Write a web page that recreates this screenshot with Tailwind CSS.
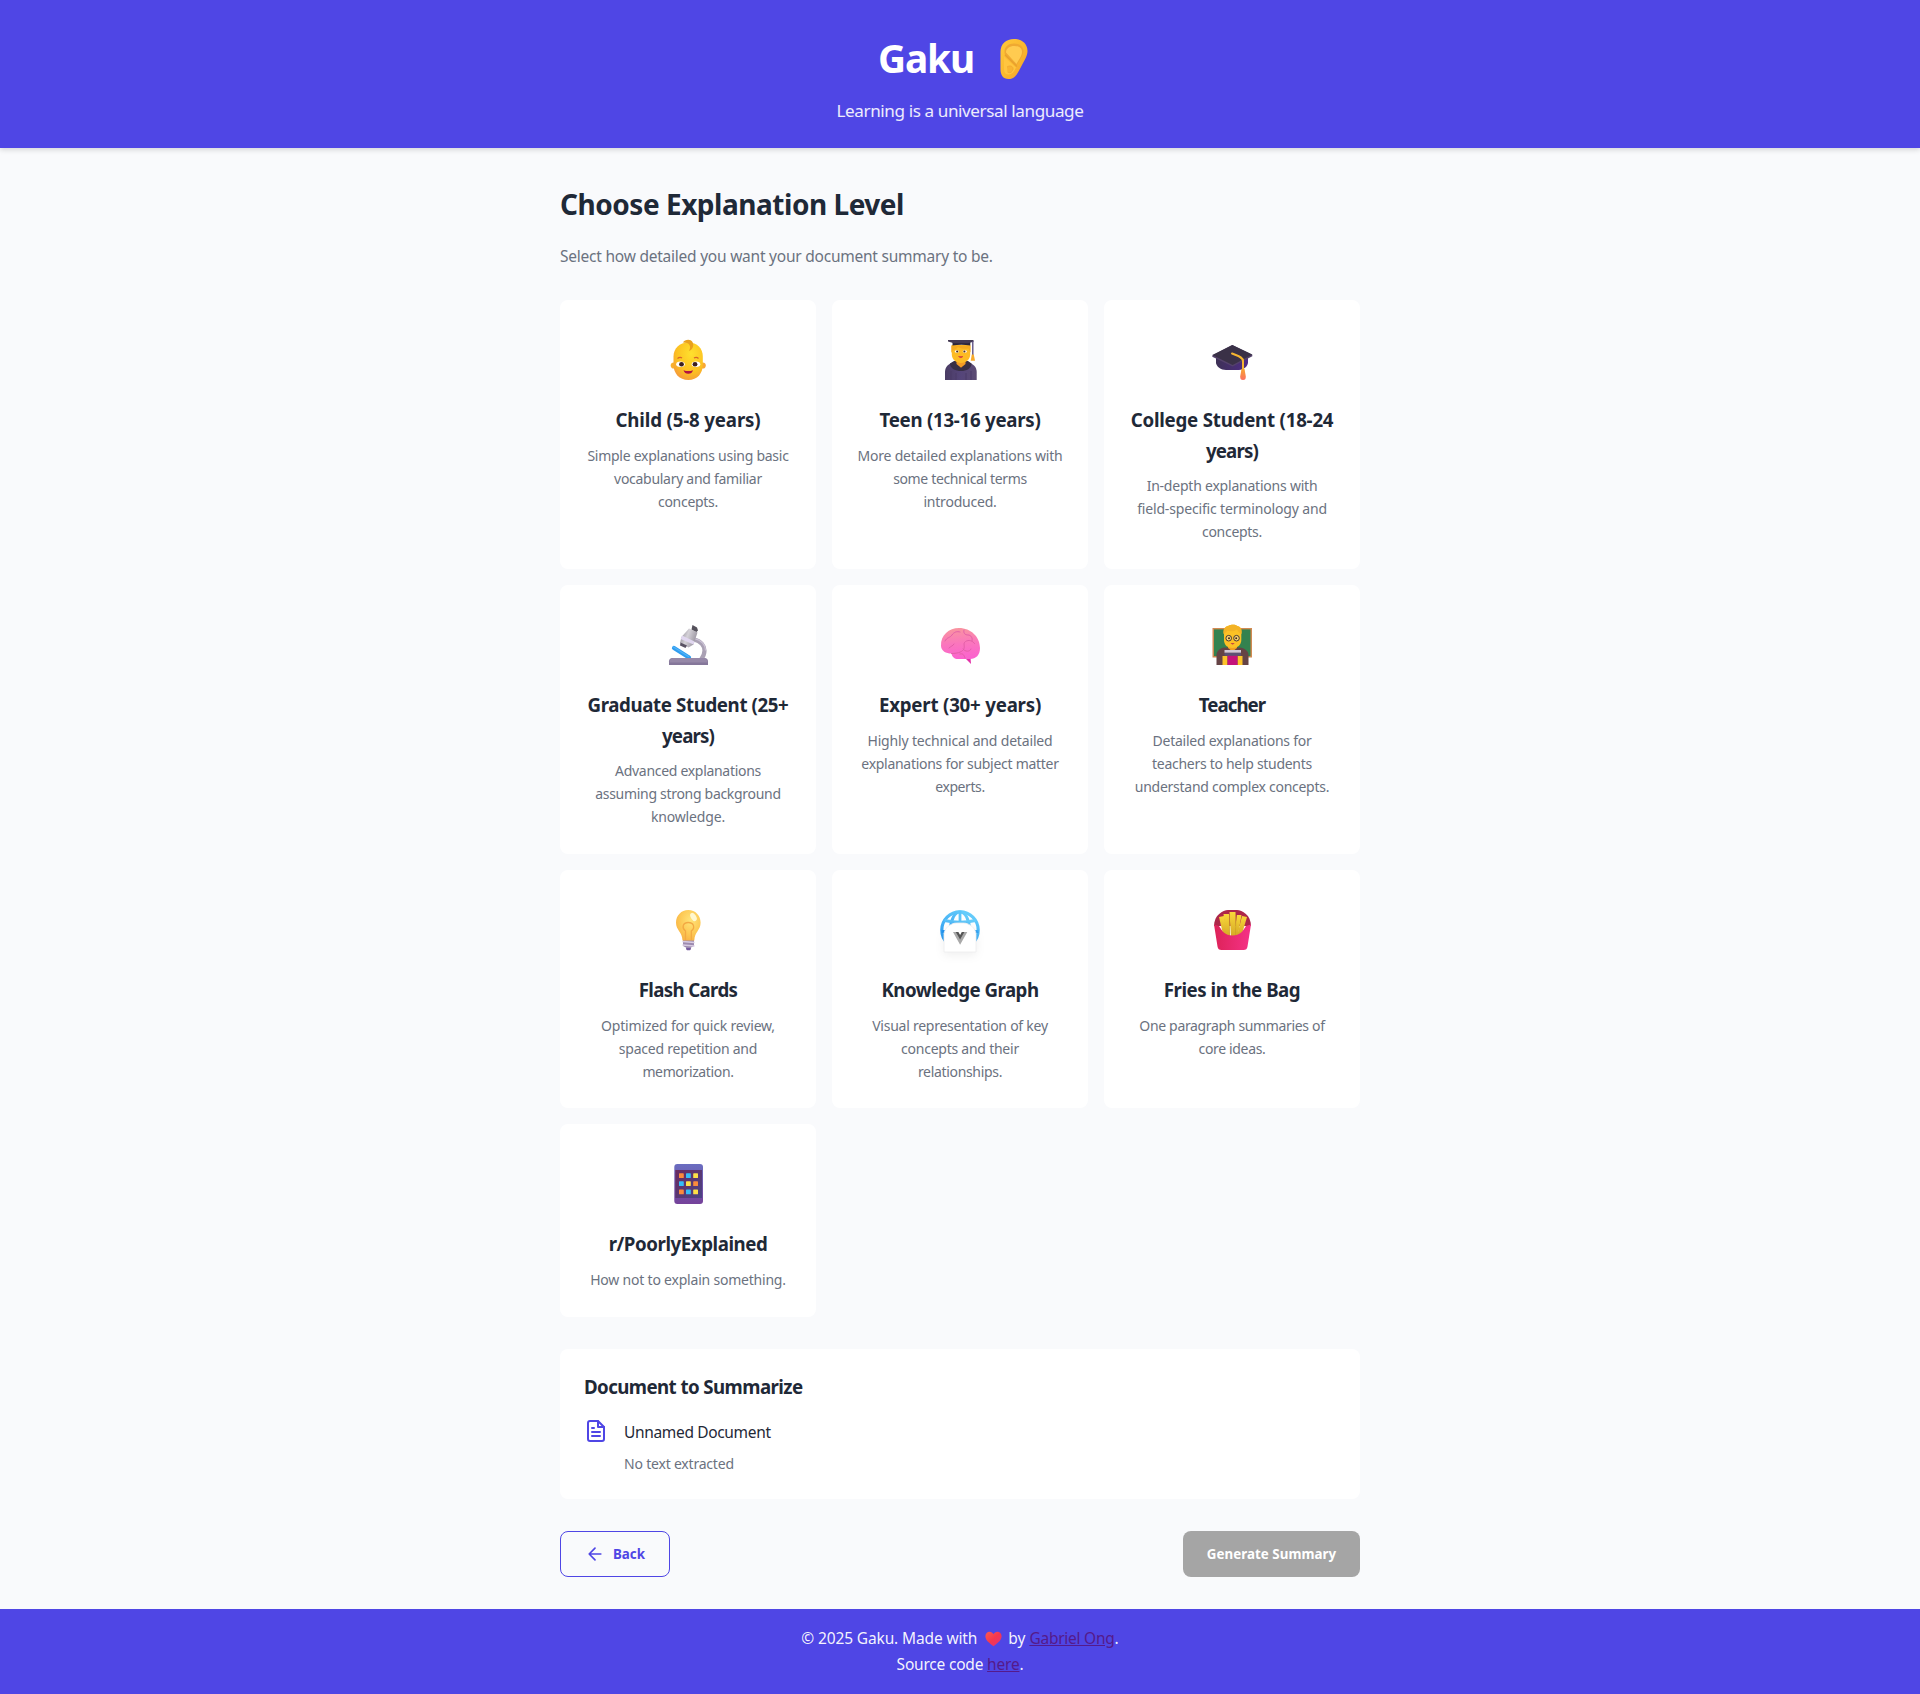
<!DOCTYPE html>
<html lang="en">
<head>
<meta charset="utf-8">
<title>Gaku</title>
<script src="https://cdn.jsdelivr.net/npm/@tailwindcss/browser@4"></script>
</head>
<body class="min-h-screen flex flex-col bg-[#f9fafc] text-[#1f2937] font-['Noto_Sans','Open_Sans',sans-serif]">

<header class="h-[148px] bg-[#4f46e5] text-white pt-[25px] flex flex-col items-center shadow-[0_2px_5px_rgba(0,0,0,0.14)]">
  <h1 class="h-16 mb-2 flex items-center gap-[20px] pr-[8px] text-[38.8px] leading-[64px] font-bold tracking-[-1.1px]">
    <span class="pt-0.5">Gaku</span>
    <svg class="w-10 h-11 mt-[3px]" viewBox="0 0 40 44">
      <defs>
        <linearGradient id="ear" x1="0" y1="0" x2="1" y2="1"><stop offset="0" stop-color="#ffc93c"/><stop offset=".6" stop-color="#f9b52c"/><stop offset="1" stop-color="#f09a35"/></linearGradient>
      </defs>
      <path d="M6.500 15C6.500 7 12 2 20 2c8 0 13.500 5 13.500 12 0 5-3 9-5.500 14-2.500 5-4.500 9-7 11.500C19 41.500 17 42 14.500 42 9 42 6.500 38 6.500 32z" fill="url(#ear)"/>
      <path d="M10.500 15c0-5.500 4-8.500 9.500-8.500s9.500 3 9.500 7.500c0 4.500-4.500 10-7 15L11 18.500z" fill="#efa932"/>
      <path d="M12 15.500c0-4 3.500-6.500 8.500-6.500 5 0 7.500 2.500 7.500 6 0 4-3.500 8-5.500 12z" fill="#ffcb50"/>
      <path d="M10 19.500l12 11c-2 4.500-4.500 7-7.500 7-3.500 0-4.500-3-4.500-6z" fill="#ffc540"/>
      <path d="M11 18l12 11.500" stroke="#e8a02e" stroke-width="1.300"/>
      <path d="M13 30c3-2 6.500-1 6 2.500-.8 3-3.500 4-5.500 2.500" fill="#f8b432" stroke="#f0a530" stroke-width=".8"/>
    </svg>
  </h1>
  <p class="text-[17.1px] leading-[28.16px] text-white/90 tracking-[-0.40px]">Learning is a universal language</p>
</header>

<main class="w-[800px] mx-auto pt-[33px] pb-8">
  <h2 class="text-[28px] leading-[46.08px] font-bold tracking-[-0.47px] mb-4">Choose Explanation Level</h2>
  <p class="text-[15.5px] leading-[25.6px] text-[#6b7280] tracking-[-0.23px] pt-px mb-[30px]">Select how detailed you want your document summary to be.</p>

  <section class="grid grid-cols-3 gap-4 text-center whitespace-nowrap">

    <article class="bg-white rounded-lg border-2 border-white p-6 pb-[23.4px] flex flex-col items-center">
      <div class="h-[62.75px] mb-[16.4px] pt-3">
        <svg class="w-11 h-11" viewBox="0 0 44 44">
          <defs><radialGradient id="baby" cx=".6" cy=".3" r=".75"><stop offset="0" stop-color="#ffe02e"/><stop offset=".65" stop-color="#fcc121"/><stop offset="1" stop-color="#f59a3b"/></radialGradient></defs>
          <circle cx="7.800" cy="27.500" r="3.100" fill="#f9b02f"/><circle cx="36.700" cy="27.500" r="3.100" fill="#f9a836"/>
          <path d="M22.300 4.500c9 0 14.500 6 14.500 14v8c0 9-5.500 15.500-14.500 15.500S7.500 35.500 7.500 26.500v-8c0-8 6-14 14.800-14z" fill="url(#baby)"/>
          <path d="M17 4.500c1.500-3 7.500-4 9.500-.5 2 4-.5 8-3.500 9 2-4 1-7-2-8z" fill="#e9a11e"/>
          <path d="M11.500 20.500q2.500-2 4.500-.5M28 20q2.500-1.500 4.500.5" stroke="#d8642a" stroke-width="1.200" fill="none"/>
          <ellipse cx="14.500" cy="26.200" rx="4.300" ry="2.700" fill="#fff"/><ellipse cx="30" cy="26.200" rx="4.300" ry="2.700" fill="#fff"/>
          <ellipse cx="15.500" cy="26.300" rx="2.400" ry="2.300" fill="#3b2020"/><ellipse cx="29" cy="26.300" rx="2.400" ry="2.300" fill="#3b2020"/>
          <path d="M17.500 32.200q4.800 1.800 9.500 0-1 3.600-4.700 3.600t-4.800-3.600z" fill="#b01243"/>
        </svg>
      </div>
      <h3 class="text-[18.7px] leading-[30.72px] font-bold mb-2 tracking-[-0.15px]">Child (5-8 years)</h3>
      <p class="text-sm leading-[23.04px] text-[#6b7280]"><span class="block tracking-[-0.26px]">Simple explanations using basic</span><span class="block tracking-[-0.29px]">vocabulary and familiar</span><span class="block tracking-[-0.28px]">concepts.</span></p>
    </article>

    <article class="bg-white rounded-lg border-2 border-white p-6 pb-[23.4px] flex flex-col items-center">
      <div class="h-[62.75px] mb-[16.4px] pt-3">
        <svg class="w-11 h-11" viewBox="0 0 44 44">
          <defs><linearGradient id="robe" x1="0" x2="1"><stop offset="0" stop-color="#4a3c63"/><stop offset=".5" stop-color="#55457a"/><stop offset="1" stop-color="#5b4b72"/></linearGradient></defs>
          <path d="M7 42V34c0-5 3.500-8.500 8-9.500h15.500c4.500 1 8.200 4.500 8.200 9.500v8z" fill="url(#robe)"/>
          <path d="M13 33v9M18 35v7M28 35v7M33 33v9" stroke="#4a3b68" stroke-width="1"/>
          <path d="M12 25.500l4-2.500h14l3.500 2.500c0 5-5 7.500-10.500 7.500S12 30.500 12 25.500z" fill="#382f45"/>
          <path d="M18.500 20h9v6l-4.500 3.800-4.500-3.800z" fill="#f39b25"/>
          <path d="M13.800 7h18.400v9.500c0 4.500-4 8.500-9.200 8.500s-9.200-4-9.200-8.500z" fill="#fdbb25"/>
          <path d="M13.300 7.500h19.200v7l-2.200-4c-4 1-9-.5-10.500-1.500-1 2-3 3-5 3l-1.500 3z" fill="#f5aa20"/>
          <ellipse cx="18.800" cy="13.500" rx="2" ry="1.300" fill="#fff"/><ellipse cx="26.800" cy="13.500" rx="2" ry="1.300" fill="#fff"/>
          <circle cx="19.200" cy="13.500" r="1.100" fill="#4a2a20"/><circle cx="26.400" cy="13.500" r="1.100" fill="#4a2a20"/>
          <path d="M20.500 18.500h4.500q-2.200 2.400-4.500 0z" fill="#c02645" stroke="#d9453a" stroke-width=".6"/>
          <path d="M14.500 4h17.800v3.500q-9-1.500-17.800 0z" fill="#2d2638"/>
          <path d="M10 2h25.500v1.700L30 5.200H16l-6-1.700z" fill="#443a54"/>
          <path d="M34.800 3v14" stroke="#54467a" stroke-width="1.300"/><path d="M33.800 16.500h2l1.200 6.200h-4.300z" fill="#f8ab2c"/>
        </svg>
      </div>
      <h3 class="text-[18.7px] leading-[30.72px] font-bold mb-2 tracking-[-0.26px]">Teen (13-16 years)</h3>
      <p class="text-sm leading-[23.04px] text-[#6b7280]"><span class="block tracking-[-0.19px]">More detailed explanations with</span><span class="block tracking-[-0.35px]">some technical terms</span><span class="block tracking-[-0.22px]">introduced.</span></p>
    </article>

    <article class="bg-white rounded-lg border-2 border-white p-6 pb-[23.4px] flex flex-col items-center">
      <div class="h-[62.75px] mb-[16.4px] pt-3">
        <svg class="w-11 h-11" viewBox="0 0 44 44">
          <defs><linearGradient id="capb" x1="0" x2="1"><stop offset="0" stop-color="#3d3155"/><stop offset="1" stop-color="#4f2c86"/></linearGradient><linearGradient id="tas" x1="0" y1="0" x2="0" y2="1"><stop offset="0" stop-color="#f7a52f"/><stop offset="1" stop-color="#fc6f62"/></linearGradient></defs>
          <path d="M6 17l32 0v7.500c0 4-5 7.500-9 7.500H16c-5 0-10-3.500-10-7.500z" fill="url(#capb)"/>
          <path d="M2.300 17.500L22.300 7l20 9.700v1.600L22.600 28.500 2.300 18.700z" fill="#54426b"/>
          <path d="M2.300 17L22.300 7l20 9.400L22.600 27z" fill="#3a3147"/>
          <path d="M22 15.500c6 2.500 11 3.500 11 7.500v9" stroke="#f5b531" stroke-width="2" fill="none" stroke-linecap="round"/>
          <path d="M31.500 31h3l1.300 7.500q.2 3.500-2.800 3.500t-2.800-3.500z" fill="url(#tas)"/>
        </svg>
      </div>
      <h3 class="text-[18.7px] leading-[30.72px] font-bold mb-2"><span class="block tracking-[-0.22px]">College Student (18-24</span><span class="block tracking-[-0.85px]">years)</span></h3>
      <p class="text-sm leading-[23.04px] text-[#6b7280]"><span class="block tracking-[-0.22px]">In-depth explanations with</span><span class="block tracking-[-0.16px]">field-specific terminology and</span><span class="block tracking-[-0.28px]">concepts.</span></p>
    </article>

    <article class="bg-white rounded-lg border-2 border-white p-6 pb-[23.4px] flex flex-col items-center">
      <div class="h-[62.75px] mb-[16.4px] pt-3">
        <svg class="w-11 h-11" viewBox="0 0 44 44">
          <defs><linearGradient id="tube" x1="0" y1="0" x2="1" y2=".4"><stop offset="0" stop-color="#85818b"/><stop offset=".5" stop-color="#d5d2d8"/><stop offset="1" stop-color="#9b96a1"/></linearGradient></defs>
          <path d="M28 16.500c7 1.500 10.500 6.500 10.500 11 0 3-1 6-3.500 9" stroke="#aaa1b4" stroke-width="4.200" fill="none"/>
          <path d="M28 15.500c8 1.500 11.500 7 11.500 12" stroke="#ccc3d6" stroke-width="1.200" fill="none"/>
          <path d="M8 25l15 9.500" stroke="#2f9df0" stroke-width="4.200" stroke-linecap="round"/>
          <path d="M7.500 24l15 9.500" stroke="#52b2f7" stroke-width="1.200" stroke-linecap="round"/>
          <path d="M23 5.500l8.500 4-4 12-5 3-8.500-4.500 1.500-6z" fill="url(#tube)"/>
          <path d="M16 12.500l12.500 6-1 3-12.800-5.500z" fill="#e1d7f0"/>
          <path d="M26.500 2l4.500 2.500 1 3-1.500 1.500-5-2.500z" fill="#55515b"/><path d="M14.500 19.500l6.500 3-1.500 2.500-5.500-2.500z" fill="#5a5364"/>
          <path d="M3 42v-3.500C3 36 4.500 35 7 35h31c2.500 0 4 1 4 3.500V42z" fill="#85779a"/><path d="M3.500 39.500q0-4.500 4-4.500h30q4 0 4 4.500z" fill="#9688a8"/>
        </svg>
      </div>
      <h3 class="text-[18.7px] leading-[30.72px] font-bold mb-2"><span class="block tracking-[-0.39px]">Graduate Student (25+</span><span class="block tracking-[-0.85px]">years)</span></h3>
      <p class="text-sm leading-[23.04px] text-[#6b7280]"><span class="block tracking-[-0.3px]">Advanced explanations</span><span class="block tracking-[-0.30px]">assuming strong background</span><span class="block tracking-[-0.16px]">knowledge.</span></p>
    </article>

    <article class="bg-white rounded-lg border-2 border-white p-6 pb-[23.4px] flex flex-col items-center">
      <div class="h-[62.75px] mb-[16.4px] pt-3">
        <svg class="w-11 h-11" viewBox="0 0 44 44">
          <defs><linearGradient id="brain" x1=".4" y1="0" x2=".5" y2="1"><stop offset="0" stop-color="#f9959f"/><stop offset=".5" stop-color="#fa76bd"/><stop offset="1" stop-color="#fb62cf"/></linearGradient></defs>
          <path d="M27 34l5.500.5.500 6.500-5-5z" fill="#e331a8"/>
          <path d="M3 23C2.500 12 11 5 21 5c12 0 21 9 21 20 0 7-4 11-10 11H20c-3.500 0-6-2-6.500-5.500C8 30.500 3.300 28 3 23z" fill="url(#brain)"/>
          <path d="M7 18c2-4 5-3 7-6s5-4 8-3M26 7c-1 3 1 5 4 5s5 3 4 6M13.500 30.500c5 0 10-1 12-4s-1-6 2-8 7-1 9 2M25 26c2 3 7 3 8 0M22 31c3-1 4 1 5 4M11 25c2-2 4-2 5-4" stroke="#e35fa8" stroke-width="1" fill="none" stroke-linecap="round"/>
        </svg>
      </div>
      <h3 class="text-[18.7px] leading-[30.72px] font-bold mb-2 tracking-[-0.21px]">Expert (30+ years)</h3>
      <p class="text-sm leading-[23.04px] text-[#6b7280]"><span class="block tracking-[-0.17px]">Highly technical and detailed</span><span class="block tracking-[-0.28px]">explanations for subject matter</span><span class="block tracking-[-0.41px]">experts.</span></p>
    </article>

    <article class="bg-white rounded-lg border-2 border-white p-6 pb-[23.4px] flex flex-col items-center">
      <div class="h-[62.75px] mb-[16.4px] pt-3">
        <svg class="w-11 h-11" viewBox="0 0 44 44">
          <rect x="2.500" y="5" width="39.500" height="29.500" fill="#d28a52"/><rect x="4" y="6.400" width="36.500" height="26.700" fill="#33824f"/>
          <path d="M6.500 42V32c0-4 3.500-7 8-7.500h15c5 .5 9 3.500 9 7.500v10z" fill="#654345"/>
          <path d="M12.500 33h5v9h-5zM27.500 33h5v9h-5z" fill="#fcc32a"/><path d="M17.500 32h10v10h-10z" fill="#c4127a"/>
          <path d="M18 21h9v4l-4.500 3.500L18 25z" fill="#f1a024"/>
          <path d="M14 9.500C14 4 17 2 22.500 2s8.800 2 8.800 7.500V17c0 5-3.800 8-8.800 8S14 22 14 17z" fill="#fdc125"/>
          <path d="M13.500 11c-1-5 2-8 5-8 2-2 7.500-2 8.500 0 4 0 5.500 4 4.500 8-2-1-3.500-2.500-4.500-4.500-3 2.500-7.500 2-9.500 1-1 1.500-2.500 2.500-4 3.500z" fill="#f3b325"/>
          <circle cx="18.700" cy="15.200" r="2.800" fill="#fdd573" stroke="#473833" stroke-width="1"/><circle cx="26.500" cy="15.200" r="2.800" fill="#fdd573" stroke="#473833" stroke-width="1"/>
          <circle cx="19" cy="15.200" r="1" fill="#3b2621"/><circle cx="26.200" cy="15.200" r="1" fill="#3b2621"/>
          <path d="M20.500 20.300h4.200q-2 2.300-4.200 0z" fill="#b41f4b"/>
          <rect x="14.500" y="27" width="16.500" height="2.800" fill="#d1c8d6"/><rect x="14.500" y="29.800" width="16.500" height="3" fill="#5c5273"/>
        </svg>
      </div>
      <h3 class="text-[18.7px] leading-[30.72px] font-bold mb-2 tracking-[-0.95px]">Teacher</h3>
      <p class="text-sm leading-[23.04px] text-[#6b7280]"><span class="block tracking-[-0.25px]">Detailed explanations for</span><span class="block tracking-[-0.29px]">teachers to help students</span><span class="block tracking-[-0.27px]">understand complex concepts.</span></p>
    </article>

    <article class="bg-white rounded-lg border-2 border-white p-6 pb-[23.4px] flex flex-col items-center">
      <div class="h-[62.75px] mb-[16.4px] pt-3">
        <svg class="w-11 h-11" viewBox="0 0 44 44">
          <defs><radialGradient id="bulb" cx=".6" cy=".35" r=".7"><stop offset="0" stop-color="#ffe479"/><stop offset=".6" stop-color="#fdc955"/><stop offset="1" stop-color="#f8b244"/></radialGradient></defs>
          <path d="M17 32h11v6l-3 1.500-.5 2.500h-4l-.5-2.500-3-1.500z" fill="#9d8bb0"/>
          <path d="M16.500 33.500l12 1M16.500 37l12 1" stroke="#d7cbe2" stroke-width="1.300"/><path d="M20 40h5l-1 2.200h-3z" fill="#7659a0"/>
          <path d="M22.300 2c7 0 12.300 5.500 12.300 12.500 0 8-6 9-6.300 18H16.500c-.3-9-6.500-10-6.500-18C10 7.500 15.300 2 22.300 2z" fill="url(#bulb)"/>
          <path d="M19.500 32V23c-4-3-3-8.500 2.800-8.500s7 5.500 3 8.500v9" stroke="#f3a943" stroke-width="1.300" fill="none"/>
          <ellipse cx="27.500" cy="9" rx="2.600" ry="4.500" transform="rotate(-32 27.500 9)" fill="#fff8d0"/>
        </svg>
      </div>
      <h3 class="text-[18.7px] leading-[30.72px] font-bold mb-2 tracking-[-0.65px]">Flash Cards</h3>
      <p class="text-sm leading-[23.04px] text-[#6b7280]"><span class="block tracking-[-0.18px]">Optimized for quick review,</span><span class="block tracking-[-0.23px]">spaced repetition and</span><span class="block tracking-[-0.36px]">memorization.</span></p>
    </article>

    <article class="bg-white rounded-lg border-2 border-white p-6 pb-[23.4px] flex flex-col items-center">
      <div class="h-[62.75px] mb-[16.4px] pt-3">
        <svg class="w-11 h-11 overflow-visible" viewBox="0 0 44 44">
          <defs><linearGradient id="globe" x1=".7" y1="0" x2=".2" y2="1"><stop offset="0" stop-color="#66cdfb"/><stop offset="1" stop-color="#2494ef"/></linearGradient></defs>
          <g fill="none" stroke="url(#globe)" stroke-width="3"><circle cx="22" cy="22" r="18.200" stroke-width="3.200"/><ellipse cx="22" cy="22" rx="9.500" ry="18.200"/><path d="M6.500 12.500q15.500 3.500 31 0M3.500 23.500q18 .1 37 0"/></g>
          <path d="M22 3v14" stroke="#5cc4f9" stroke-width="2.800"/>
          <path class="drop-shadow-[0_3px_4px_rgba(0,0,0,0.06)]" d="M6 44V26.500C6 20 13 15 18.500 15h7C31 15 38 20 38 26.500V44z" fill="#fff" stroke="#ececee" stroke-width=".8"/>
          <path d="M15 24h4.500l2.600 4.500 2.600-4.500h4.600l-7.200 12.700z" fill="#a9a9a9"/><path d="M17.800 24h2.600l1.700 3 1.700-3h2.600l-4.300 7.500z" fill="#555"/>
        </svg>
      </div>
      <h3 class="text-[18.7px] leading-[30.72px] font-bold mb-2 tracking-[-0.52px]">Knowledge Graph</h3>
      <p class="text-sm leading-[23.04px] text-[#6b7280]"><span class="block tracking-[-0.25px]">Visual representation of key</span><span class="block tracking-[-0.24px]">concepts and their</span><span class="block tracking-[-0.32px]">relationships.</span></p>
    </article>

    <article class="bg-white rounded-lg border-2 border-white p-6 pb-[23.4px] flex flex-col items-center">
      <div class="h-[62.75px] mb-[16.4px] pt-3">
        <svg class="w-11 h-11" viewBox="0 0 44 44">
          <defs><linearGradient id="bag" x1="0" x2="1"><stop offset="0" stop-color="#dd2258"/><stop offset="1" stop-color="#f53287"/></linearGradient><linearGradient id="fry" x1="0" y1="0" x2="0" y2="1"><stop offset="0" stop-color="#f9d83a"/><stop offset="1" stop-color="#d3a524"/></linearGradient></defs>
          <path d="M4 18C4 7 13 2 18 2h9c5 0 14 5 14 16z" fill="#ad2749"/>
          <g fill="url(#fry)"><path d="M9 9l5-1 4 20-5-2z"/><path d="M37 9l-5-1-5 20 5-2z"/><path d="M13.500 6h5.500l1 24-4-2z"/><path d="M27 7h4.500l-3.500 20-4 1z"/><path d="M19.500 4h6l.500 26h-5z"/></g>
          <path d="M19.500 7v21M26 7l-.6 21" stroke="#c79a20" stroke-width=".6"/>
          <path d="M4 16.500l5 1.500c3 5 6 9.500 13.500 9.500s10.500-4.500 13.500-9.500l5-1.500-3.500 22q-.5 3.500-4 3.500h-22q-3.500 0-4-3.500z" fill="url(#bag)"/>
        </svg>
      </div>
      <h3 class="text-[18.7px] leading-[30.72px] font-bold mb-2 tracking-[-0.47px]">Fries in the Bag</h3>
      <p class="text-sm leading-[23.04px] text-[#6b7280]"><span class="block tracking-[-0.34px]">One paragraph summaries of</span><span class="block tracking-[-0.34px]">core ideas.</span></p>
    </article>

    <article class="bg-white rounded-lg border-2 border-white p-6 pb-[23.4px] flex flex-col items-center">
      <div class="h-[62.75px] mb-[16.4px] pt-3">
        <svg class="w-11 h-11" viewBox="0 0 44 44">
          <defs><linearGradient id="phone" x1="0" y1="0" x2="0" y2="1"><stop offset="0" stop-color="#6a6dc0"/><stop offset="1" stop-color="#75429a"/></linearGradient><linearGradient id="screen" x1="0" y1="0" x2="1" y2="1"><stop offset="0" stop-color="#6a2a5e"/><stop offset="1" stop-color="#4a4486"/></linearGradient></defs>
          <rect x="8.300" y="2" width="28.700" height="40" rx="3" fill="url(#phone)"/><rect x="9.300" y="8" width="26.700" height="28" fill="url(#screen)"/>
          <g fill="#fb8b3c"><rect x="13" y="11.300" width="4.800" height="4.800" rx=".6"/><rect x="27.200" y="19.300" width="4.800" height="4.800" rx=".6"/><rect x="13" y="27.500" width="4.800" height="4.800" rx=".6"/></g>
          <g fill="#35bdf8"><rect x="20" y="11.300" width="4.800" height="4.800" rx=".6"/><rect x="13" y="19.300" width="4.800" height="4.800" rx=".6"/><rect x="20" y="27.500" width="4.800" height="4.800" rx=".6"/></g>
          <g fill="#fde047"><rect x="27.200" y="11.300" width="4.800" height="4.800" rx=".6"/><rect x="20" y="19.300" width="4.800" height="4.800" rx=".6"/><rect x="27.200" y="27.500" width="4.800" height="4.800" rx=".6"/></g>
        </svg>
      </div>
      <h3 class="text-[18.7px] leading-[30.72px] font-bold mb-2 tracking-[-0.44px]">r/PoorlyExplained</h3>
      <p class="text-sm leading-[23.04px] text-[#6b7280] tracking-[-0.21px]">How not to explain something.</p>
    </article>
  </section>

  <section class="mt-8 bg-white rounded-lg px-6 pt-[23.5px] pb-[23.5px]">
    <h3 class="text-[18.7px] leading-[30.72px] font-bold mb-4 tracking-[-0.58px]">Document to Summarize</h3>
    <div class="flex gap-4">
      <svg class="w-6 h-6 shrink-0 text-[#4f46e5]" viewBox="0 0 24 24" fill="none" stroke="currentColor" stroke-width="2" stroke-linecap="round" stroke-linejoin="round"><path d="M14 2H6a2 2 0 0 0-2 2v16a2 2 0 0 0 2 2h12a2 2 0 0 0 2-2V8z"/><path d="M14 2v6h6M16 13H8M16 17H8M10 9H8"/></svg>
      <div>
        <p class="pt-px text-[15.5px] leading-[25.6px] tracking-[-0.34px] mb-[7px]">Unnamed Document</p>
        <p class="text-sm leading-[23.04px] text-[#6b7280] tracking-[-0.2px]">No text extracted</p>
      </div>
    </div>
  </section>

  <div class="mt-8 flex justify-between">
    <button class="h-[46px] w-[110px] px-6 flex items-center gap-2 border border-[#4f46e5] rounded-lg text-[#4f46e5] text-[13.33px] font-bold">
      <svg class="w-5 h-5 shrink-0" viewBox="0 0 24 24" fill="none" stroke="currentColor" stroke-width="2" stroke-linecap="round" stroke-linejoin="round"><path d="M19 12H5M12 19l-7-7 7-7"/></svg>
      <span class="pt-0.5">Back</span>
    </button>
    <button class="h-[46px] w-[177px] pt-0.5 rounded-lg bg-[#a5a5a5] text-white text-[13.33px] font-bold whitespace-nowrap tracking-[0.05px]">Generate Summary</button>
  </div>
</main>

<footer class="bg-[#4f46e5] text-white/95 flex-1 pt-[17px] text-center text-[15.5px] leading-[25.6px]">
  <p class="flex justify-center items-center whitespace-nowrap">
    <span class="tracking-[-0.13px]">© 2025 Gaku. Made with</span>
    <svg class="w-[17px] h-4 ml-[7.500px] mr-[6.500px]" viewBox="0 0 17 16"><defs><linearGradient id="heart" x1="0" y1="0" x2="1" y2="1"><stop offset="0" stop-color="#fb5a50"/><stop offset=".5" stop-color="#f5374e"/><stop offset="1" stop-color="#e0307e"/></linearGradient></defs><path d="M8.500 15.200C4 12 .4 9 .4 5.300.4 2.600 2.300.8 4.600.8c1.700 0 3.100.9 3.900 2.400C9.300 1.700 10.700.8 12.400.8c2.300 0 4.200 1.800 4.200 4.500 0 3.700-3.600 6.700-8.100 9.900z" fill="url(#heart)"/></svg>
    <span class="mr-1">by</span>
    <a class="underline text-[#551a8b] tracking-[-0.25px]">Gabriel Ong</a><span>.</span>
  </p>
  <p class="tracking-[-0.2px]">Source code <a class="underline text-[#551a8b]">here</a>.</p>
</footer>
</body>
</html>
